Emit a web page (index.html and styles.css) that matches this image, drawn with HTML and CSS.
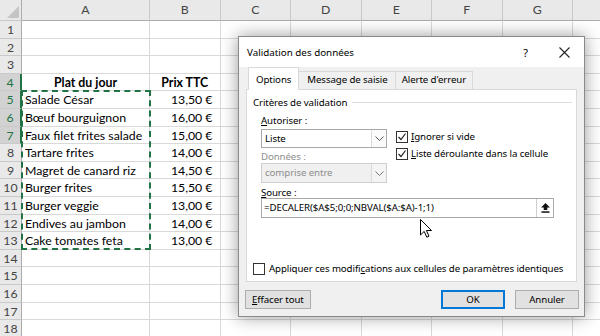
FILE: index.html
```html
<!DOCTYPE html>
<html lang="fr">
<head>
    <meta charset="UTF-8">
    <meta name="viewport" content="width=device-width, initial-scale=1.0">
    <title>Validation des données</title>
    <link rel="stylesheet" href="styles.css">
</head>
<body>

<div class="sheet">
    <div class="row head">
        <div class="rh corner"><span class="tri"></span></div>
        <div>A</div><div>B</div><div>C</div><div>D</div><div>E</div><div>F</div><div>G</div><div></div>
    </div>
    <div class="row"><div class="rh">1</div><div></div><div></div><div></div><div></div><div></div><div></div><div></div><div></div></div>
    <div class="row"><div class="rh">2</div><div></div><div></div><div></div><div></div><div></div><div></div><div></div><div></div></div>
    <div class="row"><div class="rh">3</div><div></div><div></div><div></div><div></div><div></div><div></div><div></div><div></div></div>
    <div class="row sel"><div class="rh">4</div><div class="title">Plat du jour</div><div class="title">Prix TTC</div><div></div><div></div><div></div><div></div><div></div><div></div></div>
    <div class="row sel"><div class="rh">5</div><div class="txt">Salade César</div><div class="num">13,50 €</div><div></div><div></div><div></div><div></div><div></div><div></div></div>
    <div class="row sel"><div class="rh">6</div><div class="txt">Bœuf bourguignon</div><div class="num">16,00 €</div><div></div><div></div><div></div><div></div><div></div><div></div></div>
    <div class="row sel"><div class="rh">7</div><div class="txt">Faux filet frites salade</div><div class="num">15,00 €</div><div></div><div></div><div></div><div></div><div></div><div></div></div>
    <div class="row"><div class="rh">8</div><div class="txt">Tartare frites</div><div class="num">14,00 €</div><div></div><div></div><div></div><div></div><div></div><div></div></div>
    <div class="row"><div class="rh">9</div><div class="txt">Magret de canard riz</div><div class="num">14,50 €</div><div></div><div></div><div></div><div></div><div></div><div></div></div>
    <div class="row"><div class="rh">10</div><div class="txt">Burger frites</div><div class="num">15,50 €</div><div></div><div></div><div></div><div></div><div></div><div></div></div>
    <div class="row"><div class="rh">11</div><div class="txt">Burger veggie</div><div class="num">13,00 €</div><div></div><div></div><div></div><div></div><div></div><div></div></div>
    <div class="row"><div class="rh">12</div><div class="txt">Endives au jambon</div><div class="num">14,00 €</div><div></div><div></div><div></div><div></div><div></div><div></div></div>
    <div class="row"><div class="rh">13</div><div class="txt">Cake tomates feta</div><div class="num">13,00 €</div><div></div><div></div><div></div><div></div><div></div><div></div></div>
    <div class="row"><div class="rh">14</div><div></div><div></div><div></div><div></div><div></div><div></div><div></div><div></div></div>
    <div class="row"><div class="rh">15</div><div></div><div></div><div></div><div></div><div></div><div></div><div></div><div></div></div>
    <div class="row"><div class="rh">16</div><div></div><div></div><div></div><div></div><div></div><div></div><div></div><div></div></div>
    <div class="row"><div class="rh">17</div><div></div><div></div><div></div><div></div><div></div><div></div><div></div><div></div></div>
    <div class="row"><div class="rh">18</div><div></div><div></div><div></div><div></div><div></div><div></div><div></div><div></div></div>
</div>

<!-- plage copiée A5:A13 -->
<div class="copy-range"></div>

<div class="dialog">
    <div class="titlebar">
        <span class="caption">Validation des données</span>
        <span class="tb-btn help">?</span>
        <span class="tb-btn">
            <svg width="11" height="11" viewBox="0 0 11 11"><path d="M0.5 0.5L10.5 10.5M10.5 0.5L0.5 10.5" stroke="#222" stroke-width="1.1"/></svg>
        </span>
    </div>

    <div class="tabs">
        <div class="tab active">Options</div>
        <div class="tab">Message de saisie</div>
        <div class="tab">Alerte d'erreur</div>
    </div>

    <div class="panel">
        <div class="group-title"><span>Critères de validation</span></div>

        <div class="criteria">
            <div class="fields">
                <div class="label first"><u>A</u>utoriser :</div>
                <div class="combo">
                    <span class="value">Liste</span>
                    <span class="drop"><svg width="9" height="5" viewBox="0 0 9 5"><path d="M0.5 0.5L4.5 4.5L8.5 0.5" fill="none" stroke="#555"/></svg></span>
                </div>
                <div class="label disabled">Données :</div>
                <div class="combo disabled">
                    <span class="value">comprise entre</span>
                    <span class="drop"><svg width="9" height="5" viewBox="0 0 9 5"><path d="M0.5 0.5L4.5 4.5L8.5 0.5" fill="none" stroke="#777"/></svg></span>
                </div>
            </div>
            <div class="checks">
                <div class="check">
                    <span class="box"><svg width="10" height="10" viewBox="0 0 10 10"><path d="M1.5 5L4 7.5L8.5 1.5" fill="none" stroke="#222" stroke-width="1.2"/></svg></span>
                    <span><u>I</u>gnorer si vide</span>
                </div>
                <div class="check">
                    <span class="box"><svg width="10" height="10" viewBox="0 0 10 10"><path d="M1.5 5L4 7.5L8.5 1.5" fill="none" stroke="#222" stroke-width="1.2"/></svg></span>
                    <span><u>L</u>iste déroulante dans la cellule</span>
                </div>
            </div>
        </div>

        <div class="label source-label"><u>S</u>ource :</div>
        <div class="source">
            <span class="value">=DECALER($A$5;0;0;NBVAL($A:$A)-1;1)</span>
            <span class="pick"><svg width="9" height="10" viewBox="0 0 9 10"><path d="M4.5 0L9 4.5H6.3V7H2.7V4.5H0Z" fill="#111"/><rect x="0.5" y="8.3" width="8" height="1.5" fill="#111"/></svg></span>
        </div>

        <div class="check apply">
            <span class="box"></span>
            <span>Appliquer ces modifi<u>c</u>ations aux cellules de paramètres identiques</span>
        </div>
    </div>

    <div class="buttons">
        <button class="btn"><u>E</u>ffacer tout</button>
        <span class="spacer"></span>
        <button class="btn default">OK</button>
        <button class="btn">Annuler</button>
    </div>
</div>

<svg class="cursor" width="13" height="19" viewBox="0 0 13 19">
    <path d="M0.5 0.5V16L4.2 12.4L6.8 18.2L9 17.2L6.4 11.5H11.5Z" fill="#fff" stroke="#000" stroke-width="1"/>
</svg>

</body>
</html>
```

FILE: styles.css
```css
body {
    margin: 0;
    width: 600px;
    height: 336px;
    overflow: hidden;
    position: relative;
    background: #fff;
    font-family: Lato, "Liberation Sans", sans-serif;
}

/* feuille */
.sheet {
    width: 600px;
    overflow: hidden;
}
.row {
    display: grid;
    grid-template-columns: 22px 128px 70.5px 70.5px 70.5px 70.5px 70.5px 70.5px 70.5px;
    height: 17.6px;
    font-size: 12.3px;
}
.row > div {
    box-sizing: border-box;
    border-right: 1px solid #d9d9d9;
    border-bottom: 1px solid #d9d9d9;
    white-space: nowrap;
    overflow: hidden;
    line-height: 17px;
}
.row.head {
    height: 21px;
}
.row.head > div {
    background: #e9e9e9;
    border-right-color: #c9c9c9;
    border-bottom-color: #acacac;
    color: #444;
    text-align: center;
    line-height: 20px;
}
.rh {
    background: #e9e9e9;
    color: #444;
    text-align: center;
    border-right-color: #acacac !important;
    border-bottom-color: #c9c9c9 !important;
}
.row.sel .rh {
    background: #d2d2d2;
    color: #217346;
    border-right: 2px solid #217346 !important;
}
.corner {
    position: relative;
}
.tri {
    position: absolute;
    right: 2px;
    bottom: 2px;
    width: 0;
    height: 0;
    border-left: 12px solid transparent;
    border-bottom: 12px solid #c4c4c4;
}
.title {
    font-weight: bold;
    text-align: center;
}
.txt {
    padding-left: 3px;
}
.num {
    text-align: right;
    padding-right: 7px;
}

.copy-range {
    position: absolute;
    left: 21px;
    top: 90px;
    width: 130px;
    height: 160px;
    box-sizing: border-box;
    border: 2px dashed #217346;
}

/* boite de dialogue */
.dialog {
    position: absolute;
    left: 238px;
    top: 36px;
    width: 347px;
    height: 281px;
    box-sizing: border-box;
    border: 1px solid #8a8a8a;
    background: #f0f0f0;
    box-shadow: 0 0 16px rgba(0, 0, 0, 0.4);
    font-family: "Noto Sans", sans-serif;
    font-size: 9.7px;
    letter-spacing: -0.1px;
    color: #000;
}
.titlebar {
    display: flex;
    align-items: center;
    height: 30px;
    background: #fff;
    padding-left: 8px;
}
.caption {
    flex: 1;
    font-size: 9.8px;
    letter-spacing: 0;
}
.tb-btn {
    width: 39px;
    text-align: center;
    display: flex;
    justify-content: center;
}
.help {
    font-size: 11px;
}

.tabs {
    display: flex;
    align-items: flex-end;
    height: 22px;
    margin-left: 9px;
}
.tab {
    height: 17px;
    line-height: 16px;
    padding: 0 7px 0 8px;
    border: 1px solid #d9d9d9;
    border-bottom: none;
    margin-left: -1px;
}
.tab:last-child {
    padding: 0 6px;
}
.tab.active {
    height: 22px;
    line-height: 24px;
    background: #fff;
    position: relative;
    z-index: 1;
    margin-bottom: -1px;
    margin-left: 0;
    padding: 0 7px;
}

.panel {
    height: 193px;
    margin: 0 7px;
    box-sizing: border-box;
    border: 1px solid #d9d9d9;
    background: #fff;
    padding: 4px 4px 0 6px;
}
.group-title {
    display: flex;
    align-items: center;
    height: 16px;
}
.group-title::after {
    content: "";
    flex: 1;
    border-top: 1px solid #dcdcdc;
    margin-left: 5px;
}
.criteria {
    display: flex;
    gap: 9px;
    margin-left: 8px;
    margin-top: 1px;
}
.fields {
    width: 126px;
}
.label {
    height: 15px;
    padding-top: 3px;
    line-height: 12px;
    box-sizing: border-box;
}
.label.first {
    height: 18px;
    padding-top: 4px;
}
.label.disabled {
    color: #8d8d8d;
}
.combo {
    display: flex;
    height: 19px;
    box-sizing: border-box;
    border: 1px solid #a9a9a9;
    background: #fff;
}
.combo.disabled {
    height: 20px;
    border-color: #cfcfcf;
    background: #f0f0f0;
    color: #8d8d8d;
}
.combo .value, .source .value {
    flex: 1;
    padding-left: 3px;
    line-height: 17px;
}
.drop {
    width: 14px;
    border-left: 1px solid #dadada;
    background: #fafafa;
    display: flex;
    align-items: center;
    justify-content: center;
}
.combo.disabled .drop {
    background: #f4f4f4;
}

.checks {
    padding-top: 17px;
}
.check {
    display: flex;
    align-items: center;
    gap: 3px;
    height: 17px;
}
.box {
    width: 12px;
    height: 12px;
    box-sizing: border-box;
    border: 1px solid #333;
    background: #fff;
    display: flex;
    align-items: center;
    justify-content: center;
}

.source-label {
    margin-left: 8px;
    padding-top: 4px;
    line-height: 11px;
}
.source {
    display: flex;
    width: 293px;
    height: 20px;
    margin-left: 8px;
    box-sizing: border-box;
    border: 1px solid #a9a9a9;
    background: #fff;
}
.source .value {
    padding-left: 2px;
    line-height: 18px;
}
.pick {
    width: 16px;
    border-left: 1px solid #cfcfcf;
    display: flex;
    align-items: center;
    justify-content: center;
}
.check.apply {
    margin-top: 42px;
    gap: 4px;
}

.buttons {
    display: flex;
    gap: 10px;
    margin-top: 8px;
    padding: 0 5px 0 6px;
}
.spacer {
    flex: 1;
}
.btn {
    height: 19px;
    min-width: 64px;
    padding: 0 6px;
    border: 1px solid #adadad;
    background: #e1e1e1;
    font-family: "Noto Sans", sans-serif;
    font-size: 9.7px;
    letter-spacing: -0.1px;
    color: #000;
}
.btn.default {
    border-color: #0078d7;
    box-shadow: inset 0 0 0 1px #0078d7;
}

.cursor {
    position: absolute;
    left: 420px;
    top: 219px;
}
```
